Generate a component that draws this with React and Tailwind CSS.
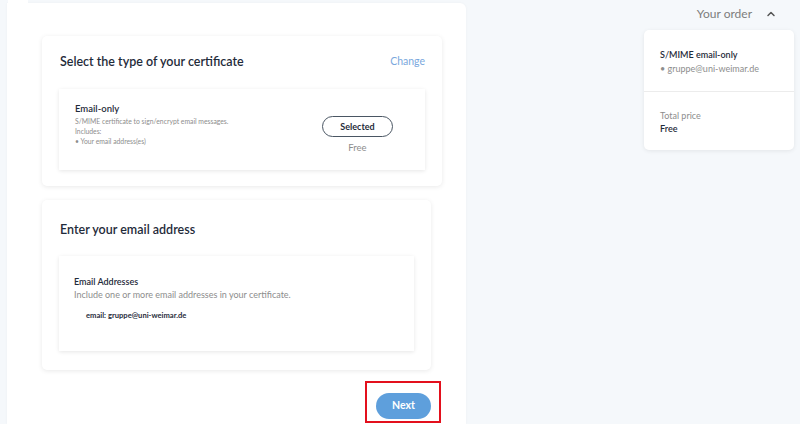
import { ChevronUp } from "lucide-react";

const App = () => {
  return (
    <div className="w-[800px] h-[424px] overflow-hidden bg-[#f5f8fb] flex font-['Lato',sans-serif] text-[#1f2b3a]">
      {/* main form panel */}
      <div className="relative ml-[7px] mt-[3px] w-[459px] bg-white rounded-tr-[6px] shadow-[0_0_3px_rgba(0,0,0,0.04)] pl-[35px] pt-[33px]">
        <div className="absolute -top-[3px] left-[1px] w-[20px] h-[3px] bg-white"></div>

        {/* certificate type */}
        <div className="w-[400px] h-[150px] bg-white rounded-[5px] shadow-[0_1px_5px_rgba(0,0,0,0.09)] px-[17px] pt-[16px]">
          <div className="flex items-center justify-between pl-[1px]">
            <h2 className="text-[12.5px] leading-[20px] font-semibold">Select the type of your certificate</h2>
            <span className="text-[10.5px] text-[#7aa8dd]">Change</span>
          </div>
          <div className="mt-[17px] h-[81px] bg-white shadow-[0_1px_4px_rgba(0,0,0,0.1)] flex justify-between pl-[16px] pr-[32px] pt-[13px]">
            <div>
              <div className="text-[9.5px] leading-[14px] font-semibold">Email-only</div>
              <div className="text-[6.8px] leading-[10px] text-[#8d8d8d]">
                <div>S/MIME certificate to sign/encrypt email messages.</div>
                <div>Includes:</div>
                <div>• Your email address(es)</div>
              </div>
            </div>
            <div className="flex flex-col items-center pt-[14px]">
              <button className="w-[71px] h-[21px] rounded-full border border-[#4a5663] text-[9px] font-bold leading-none">
                Selected
              </button>
              <span className="mt-[4px] text-[9.5px] leading-[14px] text-[#8d8d8d]">Free</span>
            </div>
          </div>
        </div>

        {/* email address */}
        <div className="mt-[14px] w-[389px] h-[170px] bg-white rounded-[5px] shadow-[0_1px_5px_rgba(0,0,0,0.09)] px-[17px] pt-[20px]">
          <h2 className="pl-[1px] text-[12.5px] leading-[20px] font-semibold">Enter your email address</h2>
          <div className="mt-[16px] h-[95px] bg-white shadow-[0_1px_4px_rgba(0,0,0,0.1)] pl-[15px] pt-[19px]">
            <div className="text-[9px] leading-[13px] font-semibold">Email Addresses</div>
            <div className="text-[9px] leading-[13px] text-[#8d8d8d]">Include one or more email addresses in your certificate.</div>
            <div className="mt-[8px] pl-[12px] text-[7.6px] leading-[12px] font-bold">email: gruppe@uni-weimar.de</div>
          </div>
        </div>

        {/* next */}
        <div className="mt-[11px] w-[399px] flex justify-end">
          <div className="border-2 border-[#e3101d] pl-[9px] pr-[8px] pt-[8px] pb-[2px]">
            <button className="w-[55px] h-[26px] rounded-full bg-[#5e9fdc] text-white text-[10.5px] font-bold">
              Next
            </button>
          </div>
        </div>
      </div>

      {/* order summary */}
      <div className="flex-1 flex flex-col items-end pr-[6px]">
        <div className="h-[32px] flex items-center gap-[13px] pr-[17px] -mt-[2px]">
          <span className="text-[12px] text-[#7d7d7d]">Your order</span>
          <ChevronUp size={12} strokeWidth={3} className="text-[#555]" />
        </div>
        <div className="w-[150px] h-[120px] bg-white rounded-[5px] shadow-[0_1px_4px_rgba(0,0,0,0.08)]">
          <div className="h-[62px] border-b border-[#ececec] pl-[16px] pt-[18px]">
            <div className="text-[9px] leading-[14px] font-semibold">S/MIME email-only</div>
            <div className="text-[9px] leading-[14px] text-[#8d8d8d]">• gruppe@uni-weimar.de</div>
          </div>
          <div className="pl-[16px] pt-[17px]">
            <div className="text-[9px] leading-[13px] text-[#8d8d8d]">Total price</div>
            <div className="text-[9px] leading-[13px] font-semibold">Free</div>
          </div>
        </div>
      </div>
    </div>
  );
};

export default App;
